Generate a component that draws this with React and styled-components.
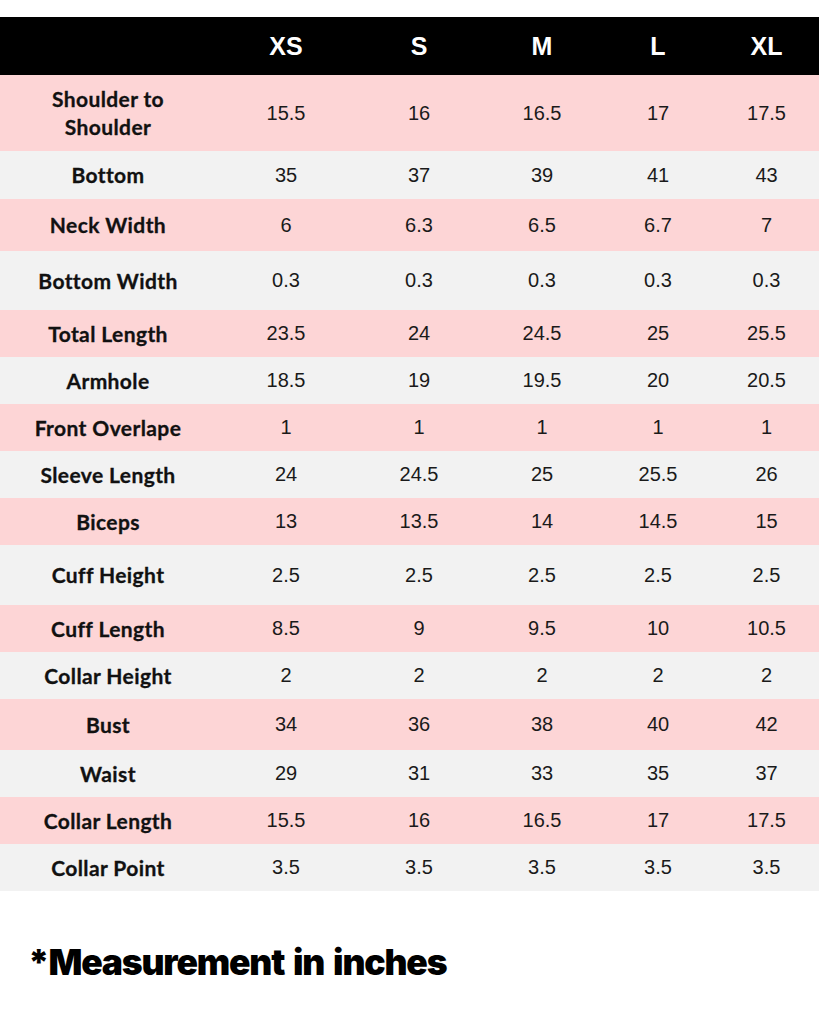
import React from "react";
import styled, { createGlobalStyle } from "styled-components";

const GlobalStyle = createGlobalStyle`
  html, body {
    margin: 0;
    padding: 0;
    background: #ffffff;
  }
`;

const Page = styled.div`
  width: 819px;
  padding-top: 17px;
`;

const Table = styled.div`
  display: flex;
  flex-direction: column;
`;

const Row = styled.div`
  display: grid;
  grid-template-columns: 216px 140px 126px 120px 112px 105px;
  align-items: center;
  height: ${(p) => p.h}px;
  background: ${(p) =>
    p.head ? "#000000" : p.pink ? "#fdd5d6" : "#f2f2f2"};
`;

const HeadCell = styled.div`
  text-align: center;
  color: #ffffff;
  font-family: "Liberation Sans", Arial, sans-serif;
  font-weight: 700;
  font-size: 25px;
`;

const Label = styled.div`
  text-align: center;
  color: #111111;
  font-family: Lato, "Open Sans", sans-serif;
  font-weight: 700;
  font-size: 21px;
  letter-spacing: 0.4px;
  line-height: 28px;
  -webkit-text-stroke: 0.3px #111111;
`;

const Cell = styled.div`
  text-align: center;
  color: #1a1a1a;
  font-family: "Liberation Sans", Arial, sans-serif;
  font-size: 20px;
`;

const Note = styled.div`
  margin-top: 50px;
  padding-left: 28px;
  font-family: Inter, sans-serif;
  font-weight: 900;
  font-size: 35.5px;
  letter-spacing: -1.2px;
  word-spacing: 3px;
  color: #000000;
`;

const sizes = ["XS", "S", "M", "L", "XL"];

const rows = [
  ["Shoulder to\nShoulder", 76, ["15.5", "16", "16.5", "17", "17.5"]],
  ["Bottom", 48, ["35", "37", "39", "41", "43"]],
  ["Neck Width", 52, ["6", "6.3", "6.5", "6.7", "7"]],
  ["Bottom Width", 59, ["0.3", "0.3", "0.3", "0.3", "0.3"]],
  ["Total Length", 47, ["23.5", "24", "24.5", "25", "25.5"]],
  ["Armhole", 47, ["18.5", "19", "19.5", "20", "20.5"]],
  ["Front Overlape", 47, ["1", "1", "1", "1", "1"]],
  ["Sleeve Length", 47, ["24", "24.5", "25", "25.5", "26"]],
  ["Biceps", 47, ["13", "13.5", "14", "14.5", "15"]],
  ["Cuff Height", 60, ["2.5", "2.5", "2.5", "2.5", "2.5"]],
  ["Cuff Length", 47, ["8.5", "9", "9.5", "10", "10.5"]],
  ["Collar Height", 47, ["2", "2", "2", "2", "2"]],
  ["Bust", 51, ["34", "36", "38", "40", "42"]],
  ["Waist", 47, ["29", "31", "33", "35", "37"]],
  ["Collar Length", 47, ["15.5", "16", "16.5", "17", "17.5"]],
  ["Collar Point", 47, ["3.5", "3.5", "3.5", "3.5", "3.5"]],
];

export default function App() {
  return (
    <>
      <GlobalStyle />
      <Page>
        <Table>
          <Row head h={58}>
            <div />
            {sizes.map((s) => (
              <HeadCell key={s}>{s}</HeadCell>
            ))}
          </Row>
          {rows.map(([label, h, vals], i) => (
            <Row key={label} h={h} pink={i % 2 === 0}>
              <Label>
                {label.split("\n").map((l) => (
                  <div key={l}>{l}</div>
                ))}
              </Label>
              {vals.map((v, j) => (
                <Cell key={j}>{v}</Cell>
              ))}
            </Row>
          ))}
        </Table>
        <Note>*Measurement in inches</Note>
      </Page>
    </>
  );
}
